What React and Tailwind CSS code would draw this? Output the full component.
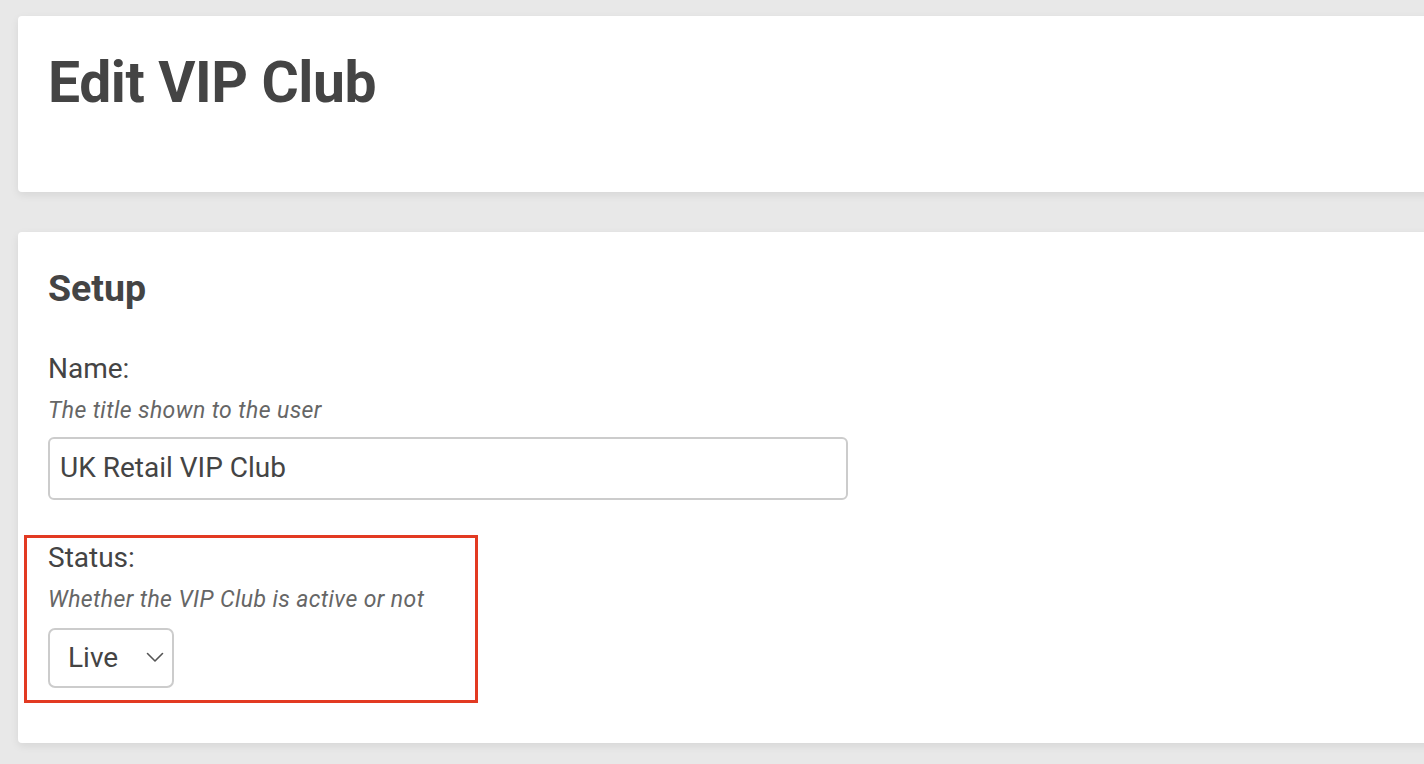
import React from "react";

export default function App() {
  return (
    <div
      className="min-h-[764px] w-full overflow-hidden bg-[#e8e8e8] pl-[18px] pt-[16px] pb-[22px]"
      style={{ fontFamily: "Roboto, 'Liberation Sans', sans-serif" }}
    >
      <div className="-mr-4 flex h-[176px] flex-col rounded-l-[4px] bg-white pl-[30px] pt-[38px] shadow-[0_3px_8px_rgba(0,0,0,0.08)]">
        <h1 className="text-[57px] font-bold leading-none tracking-[-0.4px] text-[#444444]">
          Edit VIP Club
        </h1>
      </div>

      <div className="-mr-4 mt-[40px] flex flex-col rounded-l-[4px] bg-white pb-[40px] pl-[30px] pt-[38px] shadow-[0_3px_8px_rgba(0,0,0,0.08)]">
        <h2 className="text-[37.5px] font-bold leading-none text-[#444444]">Setup</h2>

        <label className="mt-[47px] text-[28px] leading-none text-[#444444]">Name:</label>
        <p className="mt-[16px] text-[23px] italic leading-none tracking-[0.4px] text-[#666666]">
          The title shown to the user
        </p>
        <div className="mt-[15px] flex h-[63px] w-[800px] items-center rounded-[6px] border-2 border-[#cccccc] pl-[10px] text-[28px] text-[#444444]">
          UK Retail VIP Club
        </div>

        <div className="ml-[-24px] mt-[35px] flex w-[454px] flex-col border-[3px] border-[#e23a22] pb-[12px] pl-[21px] pt-[6px]">
          <label className="text-[28px] leading-none text-[#444444]">Status:</label>
          <p className="mt-[16px] text-[23px] italic leading-none tracking-[0.4px] text-[#666666]">
            Whether the VIP Club is active or not
          </p>
          <div className="mt-[17px] flex h-[60px] w-[126px] items-center justify-between rounded-[7px] border-2 border-[#cccccc] pl-[18px] pr-[8px] text-[28px] text-[#444444]">
            <span>Live</span>
            <svg width="18" height="11" viewBox="0 0 18 11" fill="none">
              <path d="M1.5 1.5 L9 9 L16.5 1.5" stroke="#555555" strokeWidth="1.6" strokeLinecap="round" strokeLinejoin="round" />
            </svg>
          </div>
        </div>
      </div>
    </div>
  );
}
